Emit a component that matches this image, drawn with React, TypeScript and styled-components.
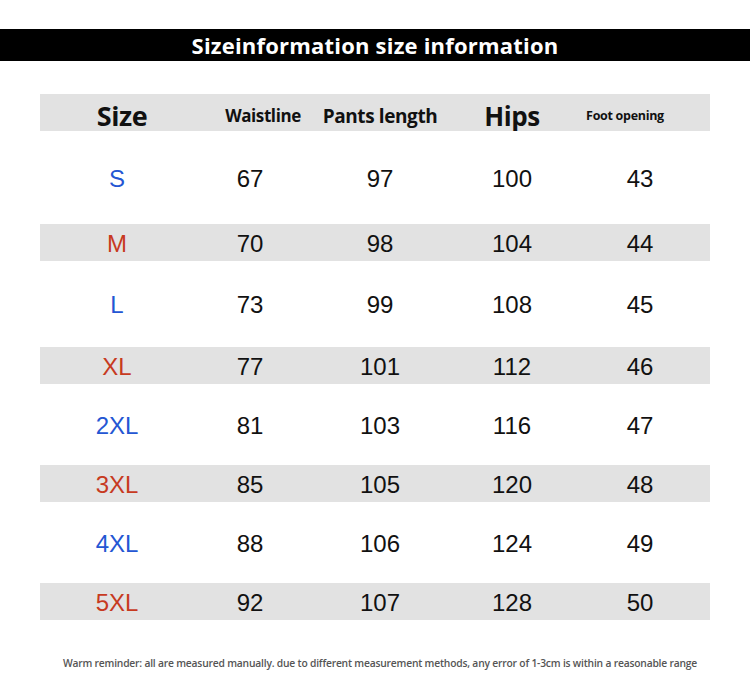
import React from "react";
import styled, { createGlobalStyle } from "styled-components";

const Global = createGlobalStyle`
  html, body { margin: 0; padding: 0; background: #fff; }
  body { font-family: "Liberation Sans", Arial, sans-serif; }
`;

const Page = styled.div`
  width: 750px;
  height: 688px;
  background: #fff;
  padding-top: 29px;
  box-sizing: border-box;
  overflow: hidden;
`;

const Banner = styled.div`
  height: 32px;
  background: #000;
  color: #fff;
  display: flex;
  align-items: center;
  justify-content: center;
  font-family: "Open Sans", sans-serif;
  font-weight: 700;
  font-size: 22px;
  letter-spacing: 0.2px;
`;

const Table = styled.div`
  margin: 33px 40px 0 40px;
  width: 670px;
  display: flex;
  flex-direction: column;
`;

const Row = styled.div<{ $h: number; $gray?: boolean }>`
  display: grid;
  grid-template-columns: 154px 112px 148px 116px 140px;
  height: ${(p) => p.$h}px;
  align-items: center;
  background: ${(p) => (p.$gray ? "#e2e2e2" : "#fff")};
`;

const HeadCell = styled.div<{ $size: number; $shift?: number }>`
  text-align: center;
  font-family: "Open Sans", sans-serif;
  font-weight: 700;
  color: #111;
  font-size: ${(p) => p.$size}px;
  letter-spacing: ${(p) => (p.$size < 14 ? "-0.3px" : "-0.4px")};
  padding-top: 3px;
  padding-left: ${(p) => (p.$shift && p.$shift > 0 ? p.$shift * 2 : 0)}px;
  padding-right: ${(p) => (p.$shift && p.$shift < 0 ? -p.$shift * 2 : 0)}px;
  white-space: nowrap;
`;

const SizeCell = styled.div<{ $red?: boolean }>`
  text-align: center;
  font-size: 24px;
  padding-top: 2px;
  color: ${(p) => (p.$red ? "#c73a1f" : "#2456d3")};
`;

const NumCell = styled.div`
  text-align: center;
  font-size: 24px;
  padding-top: 2px;
  color: #111;
`;

const Reminder = styled.div`
  margin-top: 36px;
  padding-left: 10px;
  text-align: center;
  font-family: "Open Sans", sans-serif;
  font-weight: 600;
  font-size: 10.3px;
  color: #555;
  letter-spacing: -0.2px;
`;

const rows: { s: string; v: number[]; h: number }[] = [
  { s: "S", v: [67, 97, 100, 43], h: 93 },
  { s: "M", v: [70, 98, 104, 44], h: 37 },
  { s: "L", v: [73, 99, 108, 45], h: 86 },
  { s: "XL", v: [77, 101, 112, 46], h: 37 },
  { s: "2XL", v: [81, 103, 116, 47], h: 81 },
  { s: "3XL", v: [85, 105, 120, 48], h: 37 },
  { s: "4XL", v: [88, 106, 124, 49], h: 81 },
  { s: "5XL", v: [92, 107, 128, 50], h: 37 },
];

export default function App() {
  return (
    <Page>
      <Global />
      <Banner>Sizeinformation size information</Banner>
      <Table>
        <Row $h={37} $gray>
          <HeadCell $size={27} $shift={5}>Size</HeadCell>
          <HeadCell $size={17} $shift={13}>Waistline</HeadCell>
          <HeadCell $size={19}>Pants length</HeadCell>
          <HeadCell $size={26}>Hips</HeadCell>
          <HeadCell $size={12.5} $shift={-15}>Foot opening</HeadCell>
        </Row>
        {rows.map((r, i) => (
          <Row key={r.s} $h={r.h} $gray={i % 2 === 1}>
            <SizeCell $red={i % 2 === 1}>{r.s}</SizeCell>
            {r.v.map((v, j) => (
              <NumCell key={j}>{v}</NumCell>
            ))}
          </Row>
        ))}
      </Table>
      <Reminder>
        Warm reminder: all are measured manually. due to different measurement methods, any error of 1-3cm is within a reasonable range
      </Reminder>
    </Page>
  );
}
